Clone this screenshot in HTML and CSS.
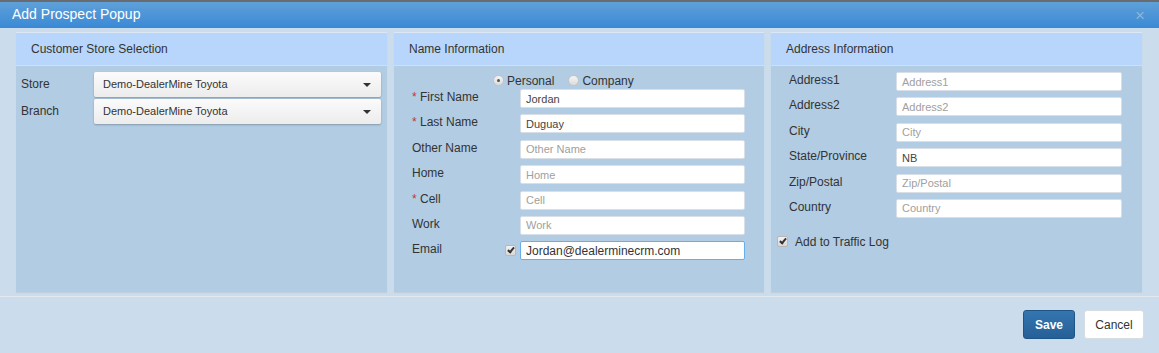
FILE: index.html
```html
<!DOCTYPE html>
<html lang="en">
<head>
  <meta charset="UTF-8">
  <title>Add Prospect Popup</title>
  <link rel="stylesheet" href="styles.css">
</head>
<body>
<div class="top-strip"></div>
<div class="modal">
  <div class="modal-header">
    <span class="modal-title">Add Prospect Popup</span>
    <span class="close-btn">&times;</span>
  </div>

  <div class="modal-body">
    <div class="panel">
      <div class="panel-heading">Customer Store Selection</div>
      <div class="panel-body store-body">
        <div class="store-row">
          <label>Store</label>
          <div class="select-box">Demo-DealerMine Toyota<span class="caret"></span></div>
        </div>
        <div class="store-row">
          <label>Branch</label>
          <div class="select-box">Demo-DealerMine Toyota<span class="caret"></span></div>
        </div>
      </div>
    </div>

    <div class="panel panel-mid">
      <div class="panel-heading">Name Information</div>
      <div class="panel-body name-body">
        <div class="radio-row">
          <span class="radio checked"></span><span class="radio-label">Personal</span>
          <span class="radio"></span><span class="radio-label">Company</span>
        </div>
        <div class="form-rows">
          <div class="form-row"><label><span class="req">*</span> First Name</label><span></span><input type="text" value="Jordan" placeholder="First Name"></div>
          <div class="form-row"><label><span class="req">*</span> Last Name</label><span></span><input type="text" value="Duguay" placeholder="Last Name"></div>
          <div class="form-row"><label>Other Name</label><span></span><input type="text" placeholder="Other Name"></div>
          <div class="form-row"><label>Home</label><span></span><input type="text" placeholder="Home"></div>
          <div class="form-row"><label><span class="req">*</span> Cell</label><span></span><input type="text" placeholder="Cell"></div>
          <div class="form-row"><label>Work</label><span></span><input type="text" placeholder="Work"></div>
          <div class="form-row"><label>Email</label><span class="check"></span><input type="text" class="focused" value="Jordan@dealerminecrm.com"></div>
        </div>
      </div>
    </div>

    <div class="panel">
      <div class="panel-heading">Address Information</div>
      <div class="panel-body addr-body">
        <div class="form-rows addr-rows">
          <div class="form-row"><label>Address1</label><input type="text" placeholder="Address1"></div>
          <div class="form-row"><label>Address2</label><input type="text" placeholder="Address2"></div>
          <div class="form-row"><label>City</label><input type="text" placeholder="City"></div>
          <div class="form-row"><label>State/Province</label><input type="text" value="NB"></div>
          <div class="form-row"><label>Zip/Postal</label><input type="text" placeholder="Zip/Postal"></div>
          <div class="form-row"><label>Country</label><input type="text" placeholder="Country"></div>
        </div>
        <div class="traffic-row">
          <span class="check"></span><span>Add to Traffic Log</span>
        </div>
      </div>
    </div>
  </div>

  <div class="modal-footer">
    <button class="btn btn-primary">Save</button>
    <button class="btn btn-default">Cancel</button>
  </div>
</div>
</body>
</html>
```

FILE: styles.css
```css
body {
  margin: 0;
  padding: 0;
  width: 1159px;
  height: 353px;
  overflow: hidden;
  font-family: 'Liberation Sans', Arial, sans-serif;
  font-size: 12px;
  color: #333;
  background-color: #cbdcec;
}

.top-strip {
  height: 2px;
  background-color: #686c70;
}

.modal-header {
  height: 26px;
  display: flex;
  align-items: center;
  justify-content: space-between;
  padding: 0 14px 0 12px;
  background: linear-gradient(to bottom, #5fa0d8, #3a89d6);
}

.modal-title {
  color: #fff;
  font-size: 14px;
  margin-top: -2px;
}

.close-btn {
  color: #8fb3d6;
  font-size: 17px;
  line-height: 1;
}

.modal-body {
  display: flex;
  gap: 7px;
  padding: 4px 16px 0 16px;
  height: 260px;
}

.panel {
  width: 371px;
  display: flex;
  flex-direction: column;
  background-color: #b1cce3;
  border-top: 1px solid #dbe7f4;
  box-shadow: 0 1px 1px rgba(0,0,0,0.06);
}

.panel-mid {
  width: 370px;
}

.panel-heading {
  height: 33px;
  line-height: 32px;
  padding-left: 15px;
  background-color: #b8d6fb;
  border-bottom: 1px solid #d2e0ee;
  box-sizing: border-box;
  font-size: 12px;
}

.panel-body {
  flex: 1;
}

/* store panel */
.store-body {
  padding: 6px 6px 0 5px;
  display: flex;
  flex-direction: column;
  gap: 2px;
}

.store-row {
  display: flex;
  align-items: center;
}

.store-row label {
  width: 73px;
  margin-top: -2px;
}

.select-box {
  flex: 1;
  height: 25px;
  box-sizing: border-box;
  padding: 0 9px;
  line-height: 24px;
  font-size: 11px;
  border-radius: 2px;
  background: linear-gradient(to bottom, #fbfbfb, #ececec);
  box-shadow: 0 1px 2px rgba(0,0,0,0.25);
  position: relative;
}

.caret {
  position: absolute;
  right: 10px;
  top: 11px;
  border-left: 4px solid transparent;
  border-right: 4px solid transparent;
  border-top: 4px solid #333;
}

/* inputs */
input[type="text"] {
  height: 19px;
  box-sizing: border-box;
  border: 1px solid #d8dfe6;
  border-radius: 2px;
  padding: 0 5px;
  font-family: 'Liberation Sans', Arial, sans-serif;
  font-size: 11px;
  color: #444;
  background: #fff;
  outline: none;
}

input[type="text"]::placeholder {
  color: #a0a0a0;
}

input.focused {
  border-color: #66afe9;
  font-size: 12px;
  color: #333;
}

.form-rows {
  display: flex;
  flex-direction: column;
  gap: 6.4px;
}

.form-row {
  display: grid;
  align-items: center;
  height: 19px;
}

.form-row label {
  margin-top: -3px;
}

.req {
  color: #c0392b;
}

/* name panel */
.name-body {
  padding: 6px 19px 0 18px;
}

.name-body .form-row {
  grid-template-columns: 88px 20px 1fr;
}

.radio-row {
  display: flex;
  align-items: center;
  height: 17px;
  padding-left: 81px;
  font-size: 12px;
}

.radio {
  width: 9px;
  height: 9px;
  border-radius: 50%;
  border: 1px solid #c4c4c4;
  background: linear-gradient(to bottom, #f4f4f4, #dcdcdc);
  position: relative;
  margin-right: 3px;
}

.radio.checked::after {
  content: "";
  position: absolute;
  left: 3px;
  top: 3px;
  width: 3px;
  height: 3px;
  border-radius: 50%;
  background: #555;
}

.radio-label {
  margin-right: 14px;
}

.check {
  width: 9px;
  height: 9px;
  border: 1px solid #b8b8b8;
  border-radius: 2px;
  background: linear-gradient(to bottom, #f2f2f2, #d8d8d8);
  position: relative;
}

.check::after {
  content: "";
  position: absolute;
  left: 3px;
  top: 0px;
  width: 2px;
  height: 5px;
  border-right: 2px solid #333;
  border-bottom: 2px solid #333;
  transform: rotate(40deg);
}

.name-body .check {
  justify-self: end;
  margin-right: 4px;
}

/* address panel */
.addr-body {
  padding: 6px 20px 0 18px;
}

.addr-rows .form-row {
  grid-template-columns: 107px 1fr;
}

.traffic-row {
  display: flex;
  align-items: center;
  gap: 7px;
  margin-top: 17px;
  margin-left: -12px;
}

/* footer */
.modal-footer {
  margin-top: 4px;
  border-top: 1px solid #e2e8ee;
  display: flex;
  justify-content: flex-end;
  gap: 9px;
  padding: 13px 15px 0 0;
}

.btn {
  height: 29px;
  font-family: 'Liberation Sans', Arial, sans-serif;
  font-size: 12px;
  border-radius: 3px;
  cursor: pointer;
}

.btn-primary {
  width: 52px;
  color: #fff;
  font-weight: bold;
  background: linear-gradient(to bottom, #3476b0, #265f97);
  border: 1px solid #1f5586;
}

.btn-default {
  width: 60px;
  color: #333;
  background: #fff;
  border: 1px solid #d6dde3;
}
```
